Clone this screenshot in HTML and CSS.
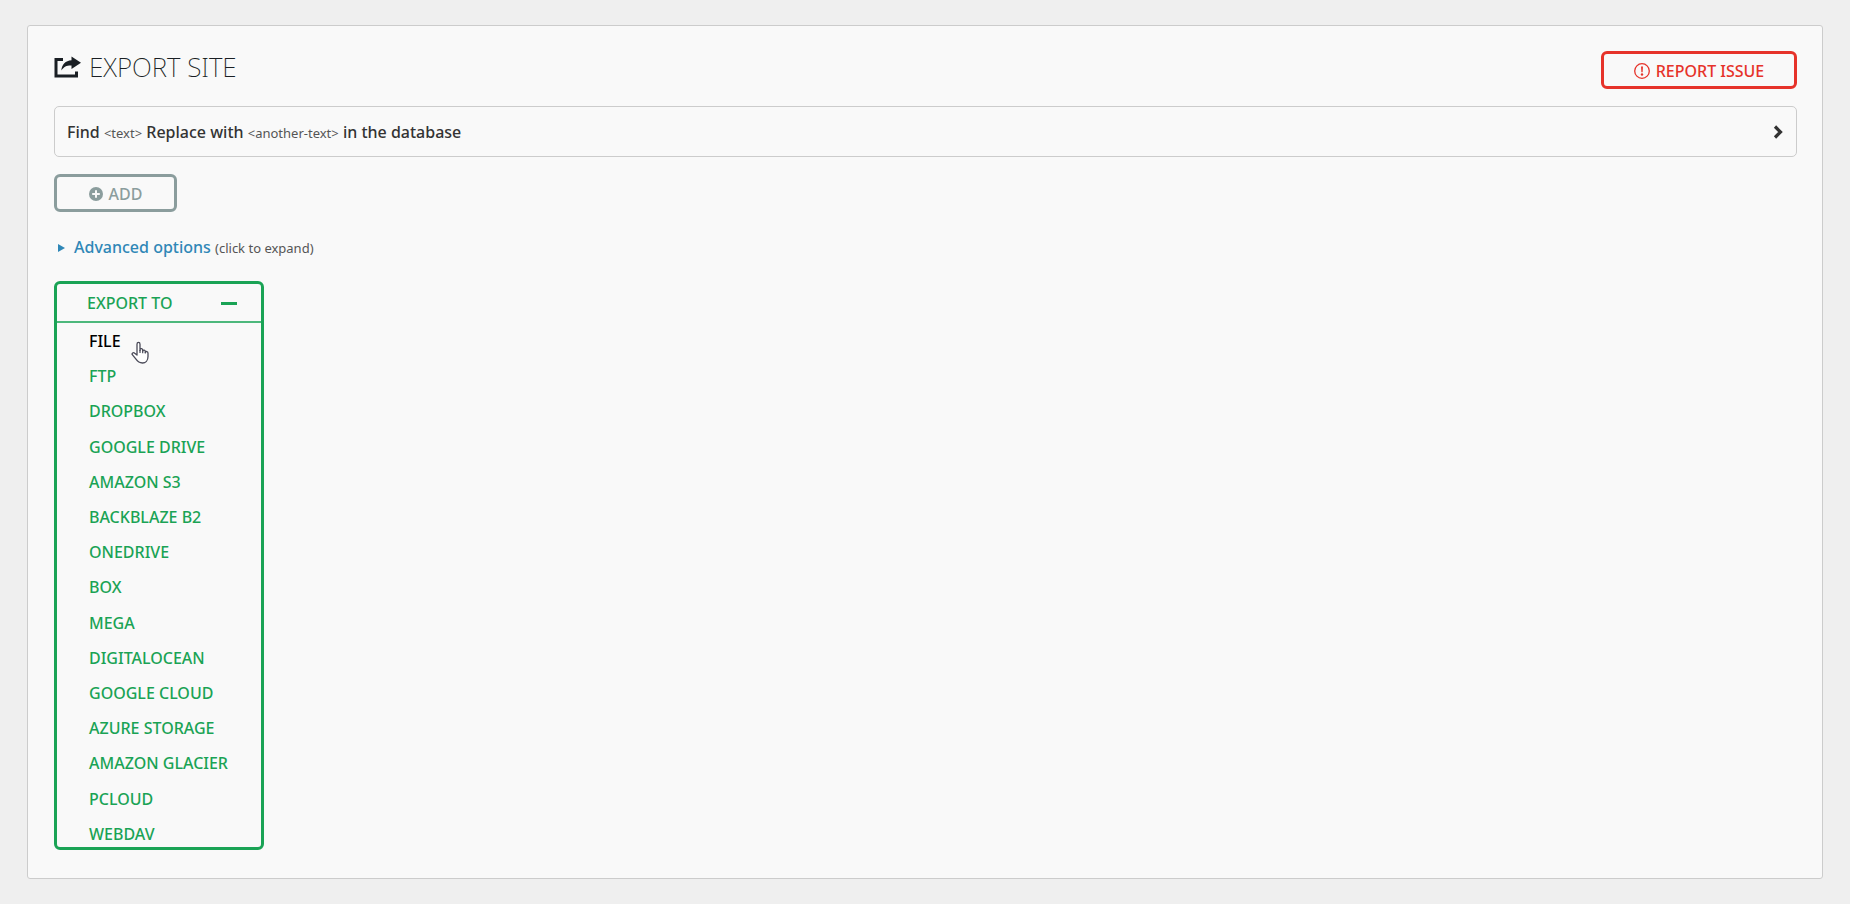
FILE: index.html
```html
<!DOCTYPE html>
<html lang="en">
<head>
    <meta charset="UTF-8">
    <meta name="viewport" content="width=device-width, initial-scale=1.0">
    <title>Export Site</title>
    <link rel="stylesheet" href="styles.css">
</head>
<body>

    <main class="panel">
        <header class="panel-header">
            <h1>
                <svg class="icon-export" viewBox="0 0 27 22" aria-hidden="true">
                    <path d="M9 3.500H2v16.500h20.500v-4.500" fill="none" stroke="currentColor" stroke-width="3"/>
                    <path d="M17.500 0.500L27 6.700L17.500 13V9.500C13 9.300 10 10.500 7.300 14.500C7.800 8.500 11.500 4.500 17.500 4.200z" fill="currentColor"/>
                </svg>
                Export Site
            </h1>
            <button type="button" class="btn btn-red">
                <svg class="icon-issue" viewBox="0 0 16 16" aria-hidden="true">
                    <circle cx="8" cy="8" r="7.300" fill="none" stroke="currentColor" stroke-width="1.300"/>
                    <path d="M7 3.500h2l-.4 5.700H7.400z" fill="currentColor"/>
                    <circle cx="8" cy="11.500" r="1.200" fill="currentColor"/>
                </svg>
                Report issue
            </button>
        </header>

        <button type="button" class="find-replace">
            <span>Find <small>&lt;text&gt;</small> Replace with <small>&lt;another-text&gt;</small> in the database</span>
            <svg class="icon-chevron" viewBox="0 0 10 14" aria-hidden="true">
                <path d="M2 1.500L7.500 7L2 12.500" fill="none" stroke="currentColor" stroke-width="3.200"/>
            </svg>
        </button>

        <button type="button" class="btn btn-gray">
            <svg class="icon-add" viewBox="0 0 14 14" aria-hidden="true">
                <circle cx="7" cy="7" r="7" fill="currentColor"/>
                <path d="M7 3.200v7.600M3.200 7h7.600" stroke="#f9f9f9" stroke-width="2"/>
            </svg>
            Add
        </button>

        <a href="#advanced" class="advanced">
            <svg class="icon-arrow" viewBox="0 0 7 8" aria-hidden="true">
                <path d="M0 0L7 4L0 8z" fill="currentColor"/>
            </svg>
            <span>Advanced options <small>(click to expand)</small></span>
        </a>

        <nav class="export-menu">
            <button type="button" class="export-toggle">Export to <span class="minus"></span></button>
            <ul>
                <li>
                    <a href="#file" class="active">File</a>
                    <!-- Hand pointer -->
                    <svg class="pointer" viewBox="0 0 18 23" aria-hidden="true">
                        <path d="M6 14V3.200C6 .8 9 .8 9 3.200V9.500V8.500C9.500 7 11.700 7.500 11.700 9V10C12.200 8.500 14.300 9 14.300 10.500V11.200C14.800 10 17 10.500 17 12.200V15.500C17 19.500 14.500 22 11.500 22C8 22 6.500 20.500 5 18.200L1.300 13.700C.5 12.300 2.300 11 3.700 12.200z" fill="#fff" stroke="#4a4a58" stroke-width="1.300" stroke-linejoin="round"/>
                        <path d="M9 9v3M11.700 9.500v2.700M14.300 11v1.500" stroke="#4a4a58" stroke-width="1.200"/>
                    </svg>
                </li>
                <li><a href="#ftp">FTP</a></li>
                <li><a href="#dropbox">Dropbox</a></li>
                <li><a href="#gdrive">Google Drive</a></li>
                <li><a href="#s3">Amazon S3</a></li>
                <li><a href="#b2">Backblaze B2</a></li>
                <li><a href="#onedrive">OneDrive</a></li>
                <li><a href="#box">Box</a></li>
                <li><a href="#mega">Mega</a></li>
                <li><a href="#digitalocean">DigitalOcean</a></li>
                <li><a href="#gcloud">Google Cloud</a></li>
                <li><a href="#azure">Azure Storage</a></li>
                <li><a href="#glacier">Amazon Glacier</a></li>
                <li><a href="#pcloud">pCloud</a></li>
                <li><a href="#webdav">WebDAV</a></li>
            </ul>
        </nav>
    </main>

</body>
</html>
```
FILE: styles.css
```css
* {
    box-sizing: border-box;
}

body {
    margin: 0;
    padding: 25px 27px;
    background: #efefef;
    color: #333;
    font-family: "Segoe UI", "Noto Sans", "Open Sans", sans-serif;
    font-size: 16px;
    line-height: 20px;
}

button {
    font: inherit;
    background: none;
    cursor: pointer;
}

a {
    text-decoration: none;
}

.panel {
    display: flex;
    flex-direction: column;
    align-items: flex-start;
    padding: 25px 25px 28px 26px;
    background: #f9f9f9;
    border: 1px solid #cccccc;
    border-radius: 3px;
}

.panel-header {
    display: flex;
    justify-content: space-between;
    align-items: flex-start;
    width: 100%;
    margin-bottom: 17px;
}

h1 {
    display: flex;
    align-items: center;
    gap: 8px;
    margin: 0;
    color: #1a1f24;
    font-size: 26px;
    font-weight: 200;
    line-height: 32px;
    text-transform: uppercase;
}

.icon-export {
    width: 27px;
    height: 22px;
}

/* Buttons */
.btn {
    display: flex;
    justify-content: center;
    align-items: center;
    gap: 6px;
    height: 38px;
    padding: 1px 20px 0;
    border: 3px solid currentColor;
    border-radius: 6px;
    font-weight: 500;
    text-transform: uppercase;
    white-space: nowrap;
}

.btn-red {
    width: 196px;
    color: #e6332a;
}

.btn-gray {
    width: 123px;
    color: #8b9d9d;
}

.icon-issue {
    width: 16px;
    height: 16px;
}

.icon-add {
    width: 14px;
    height: 14px;
}

/* Find and replace row */
.find-replace {
    display: flex;
    justify-content: space-between;
    align-items: center;
    width: 100%;
    height: 51px;
    margin-bottom: 17px;
    padding: 1px 13px 0 12px;
    border: 1px solid #cccccc;
    border-radius: 5px;
    color: #333;
    font-weight: 500;
    text-align: left;
}

small {
    color: #555;
    font-size: 13px;
    font-weight: 400;
}

.icon-chevron {
    width: 10px;
    height: 14px;
}

.advanced {
    display: flex;
    align-items: center;
    gap: 9px;
    margin: 25px 0 23px 4px;
    color: #2f87b7;
    font-weight: 500;
}

.icon-arrow {
    width: 7px;
    height: 8px;
}

/* Export menu */
.export-menu {
    width: 210px;
    border: 3px solid #1aa355;
    border-radius: 6px;
    font-weight: 500;
    text-transform: uppercase;
}

.export-toggle {
    display: flex;
    justify-content: space-between;
    align-items: center;
    width: 100%;
    height: 39px;
    padding: 1px 24px 0 30px;
    border: 0;
    border-bottom: 2px solid #4db87c;
    color: #1aa355;
    text-transform: uppercase;
}

.minus {
    width: 16px;
    height: 3px;
    background: #1aa355;
}

.export-menu ul {
    display: flex;
    flex-direction: column;
    justify-content: space-between;
    min-height: 524px;
    margin: 0;
    padding: 5px 0 0 32px;
    list-style: none;
}

.export-menu li {
    position: relative;
    display: flex;
    align-items: center;
    height: 26px;
}

.export-menu a {
    color: #1aa355;
}

.export-menu a.active {
    color: #000;
}

.pointer {
    position: absolute;
    top: 13px;
    left: 42px;
    width: 18px;
    height: 23px;
    z-index: 1;
}
```
